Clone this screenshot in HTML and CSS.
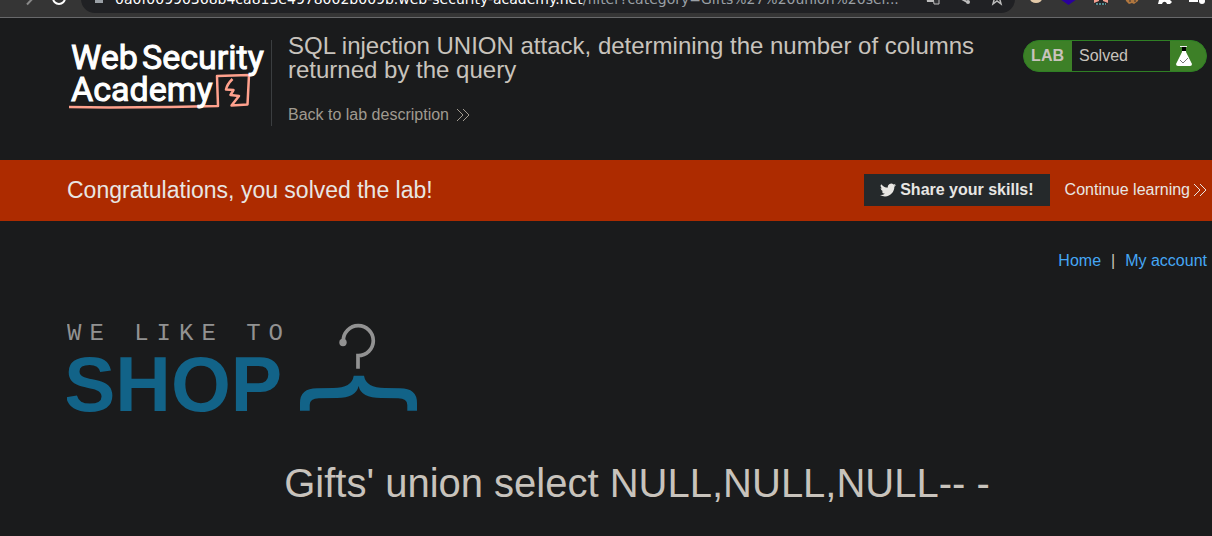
FILE: index.html
```html
<!DOCTYPE html>
<html lang="en">
<head>
<meta charset="utf-8">
<title>SQL injection UNION attack</title>
<link rel="stylesheet" href="styles.css">
</head>
<body>
<div class="browser">
  <svg class="nav-icons" width="60" height="28" viewBox="0 0 60 28" fill="none" aria-hidden="true"><path d="M19 19.500L27 11" stroke="#8a8a8a" stroke-width="2"/><circle cx="51" cy="13" r="6" stroke="#fff" stroke-width="2"/></svg>
  <div class="address">
    <svg width="8" height="28" viewBox="0 0 8 28" aria-hidden="true"><path d="M0 10h8v8H0z" fill="#9aa0a6"/></svg>
    <div class="url"><span class="host">0a0f00990368b4ca813e4978002b009b.web-security-academy.net</span>/filter?category=Gifts%27%20union%20sel...</div>
    <svg width="84" height="28" viewBox="0 0 84 28" aria-hidden="true"><path d="M2 9h9v8H3z" fill="#bdbdbd"/><path d="M9 12h6v7h-5z" fill="#303134" stroke="#bdbdbd"/><path d="M36 13l7 4" stroke="#bdbdbd" stroke-width="2"/><circle cx="44" cy="17" r="2" fill="#bdbdbd"/><path d="M73 8l2 4h4l-3 3 1 4-4-3-4 3 1-4-3-3h4z" fill="none" stroke="#bdbdbd" stroke-width="1.500"/></svg>
  </div>
  <svg width="197" height="28" viewBox="0 0 197 28" aria-hidden="true"><ellipse cx="21" cy="13.500" rx="6" ry="4.500" fill="#e3c9a8"/><path d="M45 14h17l-8.500 6z" fill="#2a009c"/><path d="M79 13h14v5l-2 2H81l-2-2z" fill="#24272a"/><path d="M79 13h5v3l-5 2zM88 13h5v5l-5-2z" fill="#f4a090"/><path d="M81 19h10" stroke="#5faab0" stroke-width="1.500" stroke-dasharray="2 1"/><path d="M110 12l1 4 3 3 3-1 2 1 4-3 1-4z" fill="#b1773f"/><path d="M114 16h2M119 16h2" stroke="#353535"/><path d="M143 12h12v3l2 2-2 2h-3c-1-3-4-3-5 0h-4l1-4z" fill="#fff"/><path d="M174 16h9" stroke="#fff" stroke-width="2"/><circle cx="187" cy="16" r="3" fill="#fff"/></svg>
</div>

<header class="lab-header">
  <a class="academy" href="#" aria-label="Web Security Academy">
    <svg width="204" height="80" viewBox="0 0 204 80">
      <path class="scribble" d="M2 71l40 .6L104 71l47-1-1-30 32-1-1.500 29.500-16 1 7.500-9.500-8.500-1 3-5-7.500-.5q1-5 6.500-10.500"/>
      <text x="4" y="33">Web</text>
      <text x="75" y="33">Security</text>
      <text x="4" y="65">Academy</text>
    </svg>
  </a>
  <div class="lab-title">
    <h2>SQL injection UNION attack, determining the number of columns returned by the query</h2>
    <a class="back" href="#">Back to lab description
      <svg width="14" height="14" viewBox="0 0 14 14" aria-hidden="true"><path class="chevrons" d="M1 1l6 6-6 6M7 1l6 6-6 6"/></svg>
    </a>
  </div>
  <div class="lab-status">
    <span class="lab-tag">LAB</span>
    <span class="lab-state">Solved</span>
    <svg width="36" height="30" viewBox="0 0 36 30" aria-hidden="true"><path d="M10 5.500h7" stroke="#eee"/><path d="M12 6h4v5l6 12q0 2-2 2H8q-2 0-2-2l6-12z" fill="#fff"/><path d="M12 6h4v4h-4z" fill="#000"/><path d="M10 19l3 3 5-5" fill="none" stroke="#777"/></svg>
  </div>
</header>

<section class="banner">
  <h4>Congratulations, you solved the lab!</h4>
  <button class="share" type="button">
    <svg width="16" height="16" viewBox="0 0 24 24" aria-hidden="true"><path fill="#e8e6e3" d="M24 4.600c-.9.400-1.800.7-2.800.8 1-.6 1.800-1.600 2.200-2.700-1 .6-2 1-3.100 1.200A4.900 4.900 0 0 0 11.900 8.400C7.700 8.200 4.100 6.100 1.700 3.200a4.900 4.900 0 0 0 1.500 6.500c-.8 0-1.600-.2-2.200-.6 0 2.300 1.600 4.400 3.900 4.900-.7.200-1.500.2-2.200.1a4.900 4.900 0 0 0 4.600 3.400A9.900 9.900 0 0 1 0 19.500 14 14 0 0 0 7.500 21.700c9.100 0 14.300-7.700 14-14.600 1-.7 1.800-1.600 2.500-2.500z"/></svg>
    Share your skills!
  </button>
  <a class="continue" href="#">Continue learning
    <svg width="14" height="14" viewBox="0 0 14 14" aria-hidden="true"><path class="chevrons" d="M1 1l6 6-6 6M7 1l6 6-6 6"/></svg>
  </a>
</section>

<nav class="top-links">
  <a href="#">Home</a><span>|</span><a href="#">My account</a>
</nav>

<main>
  <svg width="352" height="96" viewBox="0 0 352 96" role="img" aria-label="We like to shop">
    <text class="tagline" x="0" y="20">WE LIKE TO</text>
    <text class="shop-word" x="-3" y="91">SHOP</text>
    <circle cx="276" cy="22.500" r="3.700" fill="#929292"/>
    <path d="M276.300 21A15 15 0 1 1 291 35.700V48.700" fill="none" stroke="#929292" stroke-width="3.700"/>
    <path fill="#126388" d="M233 90.700V83Q233 68.300 250 68.300L266 68Q285 68 286.700 55.700H297Q299 68 318 68L333 68.300Q350 68.300 350 83V90.700H340.300V85Q340.300 78.300 331 78.300L314 78Q294 78 291.600 66Q289 78 270 78L252 78.300Q242.700 78.300 242.700 85V90.700Z"/>
  </svg>
  <h1>Gifts' union select NULL,NULL,NULL-- -</h1>
</main>
</body>
</html>
```
FILE: styles.css
```css
* { box-sizing: border-box; }

body {
  margin: 0;
  background: #1a1b1c;
  color: #c8c3bc;
  font: 16px/20px "Liberation Sans", Arial, sans-serif;
}

a { color: inherit; text-decoration: none; }
svg { flex: none; display: block; }
h1, h2, h4 { margin: 0; font-weight: 400; }

.browser {
  display: flex;
  align-items: center;
  height: 37px;
  margin-top: -19px;
  background: #353535;
  border-bottom: 1px solid #68696b;
}
.nav-icons { margin: 0 13px 0 8px; }
.address {
  flex: 1;
  display: flex;
  min-width: 0;
  padding: 0 7px 0 14px;
  border-radius: 14px;
  background: #202124;
}
.url {
  flex: 1;
  padding-left: 12px;
  overflow: hidden;
  white-space: nowrap;
  color: #9aa0a6;
  font: 14px/28px "DejaVu Sans", sans-serif;
}
.host { color: #fff; }

.lab-header {
  display: flex;
  align-items: flex-start;
  min-height: 142px;
  padding: 22px 5px 0 67px;
}
.academy {
  height: 86px;
  border-right: 1px solid #3b3e40;
}
.academy svg { margin-top: -4px; }
.academy text {
  fill: #fff;
  stroke: #fff;
  stroke-width: 1;
  font: 400 34px Roboto, sans-serif;
}
.scribble {
  fill: none;
  stroke: #ffa18d;
  stroke-width: 2.5;
  stroke-linejoin: round;
}
.lab-title { flex: 1; padding: 0 16px; }
.lab-title h2 {
  margin-top: -6px;
  font-size: 24px;
  line-height: 24px;
}
.back {
  display: flex;
  align-items: center;
  gap: 7px;
  margin-top: 23px;
  color: #a09a90;
}
.chevrons { fill: none; stroke: currentColor; stroke-width: 1; }

.lab-status {
  display: flex;
  height: 32px;
  border: 1px solid #2f7f24;
  border-radius: 16px;
  background: #3d8027;
  line-height: 30px;
  overflow: hidden;
}
.lab-tag { padding: 0 8px 0 7px; font-weight: 700; }
.lab-state { width: 98px; padding: 0 7px; background: #1a1b1c; }

.banner {
  display: flex;
  align-items: center;
  min-height: 61px;
  padding: 0 5px 2px 67px;
  background: #ad2b00;
  color: #e8e6e3;
}
.banner h4 { flex: 1; font-size: 23px; line-height: 28px; }
.share {
  display: flex;
  align-items: center;
  gap: 4px;
  height: 32px;
  margin-right: 15px;
  padding: 0 16px;
  border: 0;
  background: #25292b;
  color: #e8e6e3;
  font: 700 16px/20px "Liberation Sans", Arial, sans-serif;
}
.continue { display: flex; align-items: center; gap: 3px; }

.top-links {
  display: flex;
  justify-content: flex-end;
  gap: 10px;
  padding: 30px 5px 0;
}
.top-links a { color: #45a7f5; }

main { padding: 49px 5px 0 67px; }
.tagline {
  fill: #929292;
  font: 24px "Liberation Mono", monospace;
  letter-spacing: 8px;
}
.shop-word {
  fill: #126388;
  font: 700 77px "Liberation Sans", Arial, sans-serif;
}
main h1 {
  margin-top: 43px;
  font-size: 40px;
  line-height: 48px;
  text-align: center;
}
```
